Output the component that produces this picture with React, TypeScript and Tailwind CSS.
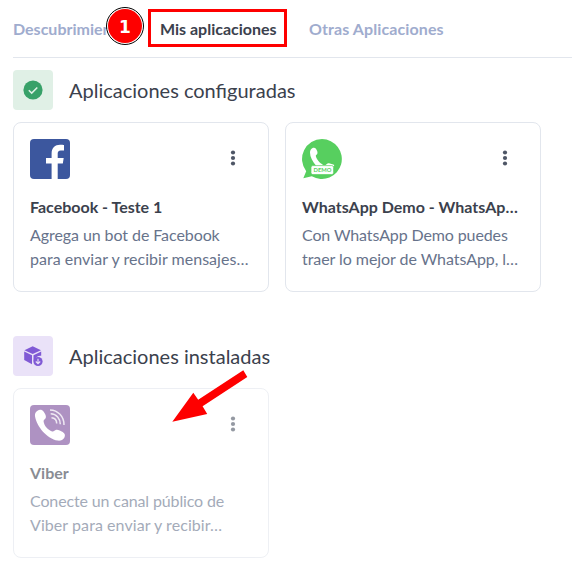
import type { ReactNode } from "react";

function Dots() {
  return (
    <svg className="mt-1.5 mr-[7px] h-6 w-6 text-[#4e5666]" viewBox="0 0 24 24" fill="currentColor">
      <circle cx="12" cy="7.500" r="2.100" />
      <circle cx="12" cy="13" r="2.100" />
      <circle cx="12" cy="18.500" r="2.100" />
    </svg>
  );
}

function FacebookLogo() {
  return (
    <svg className="h-10 w-10 rounded" viewBox="0 0 40 40">
      <rect width="40" height="40" fill="#3c579e" />
      <path
        d="M21.6 40V24.500H16V19h5.600v-4.400C21.600 9 25 5.800 30.100 5.800c1.700 0 3.200.100 3.900.200v5.400h-3.100c-2.600 0-3.200 1.300-3.200 3.200V19h6l-.9 5.500h-5.100V40z"
        fill="#fff"
      />
    </svg>
  );
}

function WhatsAppDemoLogo() {
  return (
    <svg className="h-10 w-10" viewBox="0 0 40 40">
      <path d="M20 0a20 20 0 1 1-10.200 37.300L1.300 39.200 4.200 32.200A20 20 0 0 1 20 0z" fill="#57cf5f" />
      <path
        d="M10.200 9.300c1.400-.8 3.100-.5 3.900.7 1 1.500 1.700 3.200 1.300 4.600-.2.900-1.700 1.500-1.600 2.500.7 3.500 4 7 7.300 8.900 1.600.9 2.800-.1 3.700-1 .9-1 1.900-1 3-.5l3.500 1c.8.300 1 .9.800 1.700H14.500C10.500 22.500 8 18 8 13.500c0-1.700.8-3.500 2.200-4.200z"
        fill="#fff"
      />
      <rect x="9" y="26.600" width="22.600" height="9" rx="1.800" fill="#fff" stroke="#57cf5f" strokeWidth=".7" />
      <text
        x="11.600"
        y="33.200"
        textLength="17.800"
        lengthAdjust="spacingAndGlyphs"
        className="fill-[#57cf5f] font-['Lato',sans-serif] text-[5.8px] font-bold"
      >
        DEMO
      </text>
    </svg>
  );
}

function ViberLogo() {
  return (
    <svg className="h-10 w-10 rounded" viewBox="0 0 40 40" fill="none">
      <rect width="40" height="40" fill="#7a4b9b" />
      <path
        d="M7.500 5.700C9.600 4.400 12 4.500 13.700 6.700c1.700 2.200 2.600 4.300 2.100 6-.4 1.500-2.400 1.900-2.200 3.800.6 4.300 4.200 8.500 8.500 9.900 1.700.5 2.500-1.200 4-1.600 1.900-.5 4.300.9 6.600 2.300 2.300 1.500 2.900 3.500 1.600 5.600-1.300 2-3.900 3.400-6.600 2.900C17 33.500 6.800 21.800 5 11.200c-.4-2.300.6-4.300 2.500-5.500z"
        fill="#fff"
      />
      <path
        d="M20 4.900c8 .2 14 6.500 14 15M20.700 8.800c5.900.2 9.500 4.600 9.600 10.500M21.500 12.800c3.200.2 5.200 2.600 5.200 5.700"
        stroke="#fff"
        strokeOpacity=".8"
        strokeWidth="1.500"
      />
    </svg>
  );
}

function CheckBadge() {
  return (
    <svg className="h-6 w-6" viewBox="0 0 24 24" fill="none">
      <circle cx="12" cy="12" r="9.600" fill="#38a169" />
      <path d="m7.800 12.200 2.900 2.900 5.600-5.600" stroke="#e0f0e6" strokeWidth="1.500" />
    </svg>
  );
}

function BoxBadge() {
  return (
    <svg className="h-6 w-6" viewBox="0 0 24 24" fill="none">
      <path d="M11.700 2.300 20 6.200l-8.300 3.900-8.300-3.900z" fill="#805ad5" />
      <path d="M3.200 7.500 11 11.300v9L3.200 16z" fill="#805ad5" />
      <path d="m12.500 11.300 7.700-3.800v4.300a6 6 0 0 0-6.600 4.500l-1.100.8z" fill="#805ad5" />
      <circle cx="17" cy="17.500" r="4.600" fill="#805ad5" />
      <path d="M17 14.700v5m-2.200-2.200 2.200 2.200 2.200-2.200" stroke="#eae2f8" strokeWidth="1.100" />
    </svg>
  );
}

function SectionHeader({ icon, tone, title }: { icon: ReactNode; tone: string; title: string }) {
  return (
    <header className="flex h-10 items-center gap-4">
      <div className={`flex h-10 w-10 items-center justify-center rounded ${tone}`}>{icon}</div>
      <h2 className="text-xl text-[#3b414d]">{title}</h2>
    </header>
  );
}

type Line = { text: string; tracking: string };
type CardProps = { logo: ReactNode; title: string; lines: Line[]; faded?: boolean };

function AppCard({ logo, title, lines, faded }: CardProps) {
  return (
    <article
      className={`h-[170px] w-64 rounded-lg border border-[#e2e6ed] p-4 ${faded ? "opacity-60" : ""}`}
    >
      <div className="flex justify-between">
        {logo}
        <Dots />
      </div>
      <h3 className="mt-4 text-base font-bold whitespace-nowrap text-[#3b414d]">{title}</h3>
      <p className="mt-1 text-base whitespace-nowrap text-[#67738b]">
        {lines.map(({ text, tracking }) => (
          <span key={text} className={`block ${tracking}`}>
            {text}
          </span>
        ))}
      </p>
    </article>
  );
}

export default function App() {
  return (
    <main className="relative h-[584px] w-[572px] overflow-hidden bg-white pl-[13px] font-['Lato',sans-serif]">
      <nav className="flex h-[58px] items-center gap-8 border-b border-[#e2e6ed] text-base font-bold whitespace-nowrap text-[#9facce]">
        <span className="mr-[21px] w-[94px] overflow-hidden">Descubrimien</span>
        <span className="w-[117px] text-[#3b414d]">Mis aplicaciones</span>
        <span className="tracking-[0.1px]">Otras Aplicaciones</span>
      </nav>

      <section className="mt-3">
        <SectionHeader icon={<CheckBadge />} tone="bg-[#e0f0e6]" title="Aplicaciones configuradas" />
        <div className="mt-3 flex gap-4">
          <AppCard
            logo={<FacebookLogo />}
            title="Facebook - Teste 1"
            lines={[
              { text: "Agrega un bot de Facebook", tracking: "tracking-[-0.08px]" },
              { text: "para enviar y recibir mensajes…", tracking: "tracking-[0.03px]" },
            ]}
          />
          <AppCard
            logo={<WhatsAppDemoLogo />}
            title="WhatsApp Demo - WhatsAp…"
            lines={[
              { text: "Con WhatsApp Demo puedes", tracking: "tracking-[-0.12px]" },
              { text: "traer lo mejor de WhatsApp, l…", tracking: "tracking-[-0.06px]" },
            ]}
          />
        </div>
      </section>

      <section className="mt-11">
        <SectionHeader icon={<BoxBadge />} tone="bg-[#eae2f8]" title="Aplicaciones instaladas" />
        <div className="mt-3 flex">
          <AppCard
            faded
            logo={<ViberLogo />}
            title="Viber"
            lines={[
              { text: "Conecte un canal público de", tracking: "tracking-[-0.13px]" },
              { text: "Viber para enviar y recibir…", tracking: "tracking-[0.07px]" },
            ]}
          />
        </div>
      </section>

      {/* Tutorial callouts over the page */}
      <div className="absolute top-[9px] left-[148px] h-[38px] w-[139px] border-[3px] border-[#fe0000]" />
      <div className="absolute top-[7px] left-[106px] flex h-[38px] w-[38px] items-center justify-center rounded-full border border-black bg-white p-px">
        <span className="flex h-full w-full items-center justify-center rounded-full bg-[#fe0000] pt-0.5 font-['DejaVu_Sans',sans-serif] text-[17px] leading-none font-bold text-white">
          1
        </span>
      </div>
      <svg className="absolute top-[368px] left-[170px] h-[56px] w-[80px]" viewBox="0 0 80 56">
        <path d="M2.300 53.700 23.300 24.700 28.200 31.800 73.300 2.300 77.300 9 32.600 38.300 37.200 46z" fill="#fe0000" />
      </svg>
    </main>
  );
}
